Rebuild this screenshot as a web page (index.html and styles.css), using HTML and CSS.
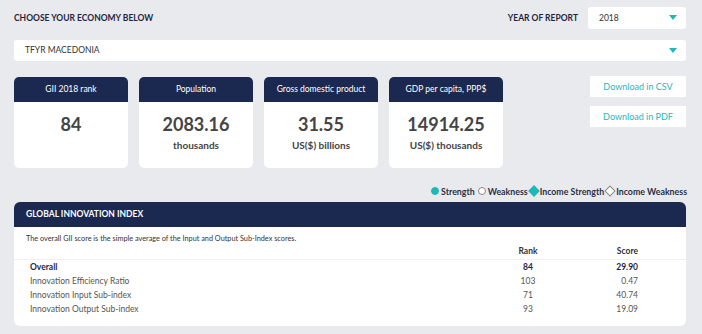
FILE: index.html
```html
<!DOCTYPE html>
<html lang="en">
<head>
  <meta charset="UTF-8">
  <title>Economy profile</title>
  <link rel="stylesheet" href="styles.css">
</head>
<body>
  <!-- Top bar -->
  <div class="top-row">
    <div class="label">CHOOSE YOUR ECONOMY BELOW</div>
    <div class="year">
      <span class="label">YEAR OF REPORT</span>
      <div class="select select-year">2018<span class="caret"></span></div>
    </div>
  </div>

  <div class="select select-economy">TFYR MACEDONIA<span class="caret"></span></div>

  <!-- Cards -->
  <div class="cards-row">
    <div class="card">
      <div class="card-head">GII 2018 rank</div>
      <div class="card-value">84</div>
    </div>
    <div class="card">
      <div class="card-head">Population</div>
      <div class="card-value">2083.16</div>
      <div class="card-unit">thousands</div>
    </div>
    <div class="card">
      <div class="card-head">Gross domestic product</div>
      <div class="card-value">31.55</div>
      <div class="card-unit">US($) billions</div>
    </div>
    <div class="card">
      <div class="card-head">GDP per capita, PPP$</div>
      <div class="card-value">14914.25</div>
      <div class="card-unit">US($) thousands</div>
    </div>
    <div class="downloads">
      <a href="#" class="btn">Download in CSV</a>
      <a href="#" class="btn">Download in PDF</a>
    </div>
  </div>

  <!-- Legend -->
  <div class="legend">
    <span class="dot full"></span>Strength
    <span class="dot"></span>Weakness
    <span class="diamond full"></span>Income Strength
    <span class="diamond"></span>Income Weakness
  </div>

  <!-- Panel -->
  <div class="panel">
    <div class="panel-head">GLOBAL INNOVATION INDEX</div>
    <p class="panel-desc">The overall GII score is the simple average of the Input and Output Sub-Index scores.</p>
    <table class="scores">
      <thead>
        <tr><th></th><th class="rank">Rank</th><th class="score">Score</th></tr>
      </thead>
      <tbody>
        <tr class="main"><td>Overall</td><td class="rank">84</td><td class="score">29.90</td></tr>
        <tr><td>Innovation Efficiency Ratio</td><td class="rank">103</td><td class="score">0.47</td></tr>
        <tr><td>Innovation Input Sub-index</td><td class="rank">71</td><td class="score">40.74</td></tr>
        <tr><td>Innovation Output Sub-index</td><td class="rank">93</td><td class="score">19.09</td></tr>
      </tbody>
    </table>
  </div>
</body>
</html>
```

FILE: styles.css
```css
/* General */
body {
  font-family: Lato, "Open Sans", sans-serif;
  margin: 0;
  padding: 7px 16px 0 14px;
  background-color: #e9eaee;
  color: #1f2540;
}

.label {
  font-size: 8.5px;
  font-weight: bold;
  color: #1f2540;
}

/* Top bar */
.top-row {
  display: flex;
  justify-content: space-between;
  align-items: center;
  height: 22px;
}

.year {
  display: flex;
  align-items: center;
  gap: 10px;
}

.select {
  position: relative;
  background-color: #fff;
  border-radius: 3px;
  font-size: 8.5px;
  color: #333;
  box-sizing: border-box;
}

.select-year {
  width: 98px;
  height: 22px;
  line-height: 22px;
  padding-left: 11px;
}

.select-economy {
  margin-top: 11px;
  height: 21px;
  line-height: 21px;
  padding-left: 11px;
}

.caret {
  position: absolute;
  right: 9px;
  top: 8px;
  border-left: 4px solid transparent;
  border-right: 4px solid transparent;
  border-top: 5px solid #1fb8b8;
}

/* Cards */
.cards-row {
  display: flex;
  gap: 11px;
  margin-top: 16px;
}

.card {
  width: 114px;
  height: 91px;
  background-color: #fff;
  border-radius: 5px;
  overflow: hidden;
  text-align: center;
}

.card-head {
  background-color: #1b2850;
  color: #fff;
  height: 25px;
  line-height: 25px;
  font-size: 8.5px;
}

.card-value {
  font-size: 18px;
  font-weight: bold;
  color: #444;
  margin-top: 11px;
}

.card-unit {
  font-size: 10px;
  font-weight: bold;
  color: #444;
  margin-top: 4px;
}

.downloads {
  margin-left: auto;
  margin-top: -1px;
  display: flex;
  flex-direction: column;
  gap: 9px;
}

.btn {
  display: block;
  width: 96px;
  height: 21px;
  line-height: 21px;
  background-color: #fff;
  color: #1fb8b8;
  text-align: center;
  text-decoration: none;
  font-size: 9px;
}

/* Legend */
.legend {
  display: flex;
  justify-content: flex-end;
  align-items: center;
  margin: 18px -1px 0 0;
  font-size: 8.8px;
  font-weight: bold;
  color: #2a2f45;
  height: 10px;
}

.dot {
  width: 6px;
  height: 6px;
  border-radius: 50%;
  border: 1px solid #888;
  margin: 0 2px 0 3px;
  background-color: #fff;
}

.dot.full {
  border-color: #1fb8b8;
  background-color: #1fb8b8;
}

.diamond {
  width: 6px;
  height: 6px;
  border: 1px solid #888;
  transform: rotate(45deg);
  margin: 0 2px 0 2px;
  background-color: #fff;
}

.diamond.full {
  border-color: #1fb8b8;
  background-color: #1fb8b8;
}

/* Panel */
.panel {
  margin-top: 6px;
  background-color: #fff;
  border-radius: 6px;
  overflow: hidden;
  height: 124px;
}

.panel-head {
  background-color: #1b2850;
  color: #fff;
  height: 25px;
  line-height: 25px;
  padding-left: 12px;
  font-size: 8.5px;
  font-weight: bold;
}

.panel-desc {
  margin: 7px 0 0 12px;
  font-size: 7.3px;
  color: #333;
}

.scores {
  width: 100%;
  border-collapse: collapse;
  font-size: 8.5px;
  color: #555;
  margin-top: 0;
}

.scores th {
  font-weight: bold;
  color: #333;
  height: 14px;
  border-bottom: 1px solid #f0f0f2;
}

.scores td {
  height: 14px;
  padding: 0;
}

.scores td:first-child {
  padding-left: 16px;
}

.scores .rank {
  width: 40px;
  text-align: center;
}

.scores .score {
  width: 88px;
  padding-right: 48px;
  text-align: right;
}

.scores .main td {
  font-weight: bold;
  color: #1f2540;
}
```
